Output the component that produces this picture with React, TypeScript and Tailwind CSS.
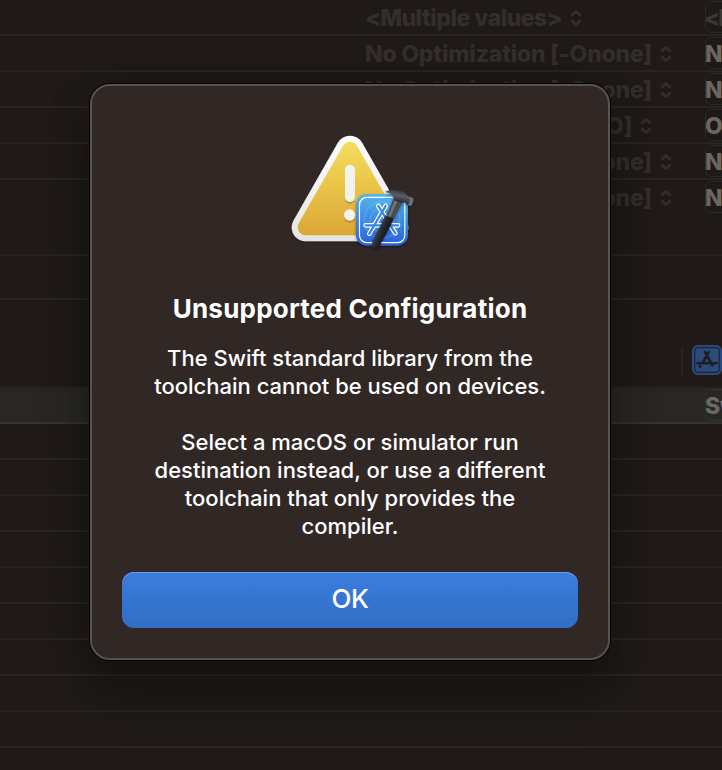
import React from "react";

function Chevrons() {
  return (
    <svg width="12" height="16" viewBox="0 0 12 16" fill="none" stroke="currentColor" strokeWidth="2.5" strokeLinecap="round" strokeLinejoin="round">
      <path d="M2 5 L6 1.4 L10 5 M2 11 L6 14.6 L10 11" />
    </svg>
  );
}

const settings = [
  { label: "<Multiple values>", value: "<M" },
  { label: "No Optimization [-Onone]", value: "No" },
  { label: "No Optimization [-Onone]", value: "No" },
  { label: "Optimize for Speed [-O]", value: "Op" },
  { label: "No Optimization [-Onone]", value: "No" },
  { label: "No Optimization [-Onone]", value: "No" },
];

function SettingsTable() {
  return (
    <div className="flex h-[770px] w-[722px] flex-col overflow-hidden">
      {settings.map((s, i) => (
        <div key={i} className={`flex h-9 shrink-0 border-b-2 ${i === 5 ? "border-transparent" : "border-[#292422]"}`}>
          <div className="flex w-[705px] shrink-0 items-center gap-[8px] pt-[2px] pl-[365px] text-[23px] font-extrabold whitespace-nowrap text-[#332e2c]">
            <span className={i === 0 ? "tracking-[-0.5px]" : i === 3 ? "tracking-[-0.05px]" : "tracking-[-0.2px]"}>{s.label}</span>
            <Chevrons />
          </div>
          <div className={`mt-px h-8 w-20 shrink-0 rounded-[6px] border border-[#233020] text-[23px] leading-[32px] font-extrabold ${i === 0 ? "text-[#3a3633]" : "text-[#6b6563]"}`}>
            <span className={i === 0 ? "-ml-[2px] tracking-[-1.5px]" : "-ml-px"}>{s.value}</span>
          </div>
        </div>
      ))}
      <div className="h-10 shrink-0 border-b-2 border-[#292422]" />
      <div className="h-11 shrink-0 border-b-2 border-[#292422]" />
      <div className="flex h-[88px] shrink-0 items-start justify-end border-b-2 border-[#271e1c] pt-[45px]">
        <div className="mt-[3px] mr-[9px] h-7 w-[2px] bg-[#292422]" />
        <svg width="30" height="30" viewBox="0 0 30 30" fill="none">
          <rect x="1" y="1" width="28" height="28" rx="5" fill="#2c4a7a" stroke="#294a80" strokeWidth="2" />
          <rect x="2.7" y="2.7" width="24.6" height="24.6" rx="3.5" stroke="#1d2431" strokeWidth="1.2" />
          <path d="M13 7 L20.500 20.500 M16.800 7 L10.500 18 M5.500 18.300 H16.500 M20 18.300 H24.500 M8.300 21 L7.800 21.800" stroke="#1c1e24" strokeWidth="2.6" strokeLinecap="round" />
        </svg>
      </div>
      <div className="flex h-9 shrink-0 justify-end border-b-2 border-[#343230] bg-[#282725]">
        <div className="mt-px -mr-[63px] h-8 w-20 shrink-0 rounded-[6px] border border-[#2b3827] text-[23px] leading-[32px] font-extrabold text-[#6b6866]">
          <span className="-ml-px tracking-[-0.5px]">Swift</span>
        </div>
      </div>
      {Array.from({ length: 9 }, (_, i) => (
        <div key={i} className="h-9 shrink-0 border-b-2 border-[#292422]" />
      ))}
    </div>
  );
}

function AlertIcon() {
  return (
    <svg width="145" height="135" viewBox="0 0 435 405" fill="none">
      <defs>
        <linearGradient id="rim" gradientUnits="userSpaceOnUse" x1="0" y1="30" x2="0" y2="348">
          <stop offset="0" stopColor="#ffffff" />
          <stop offset="1" stopColor="#e6e4e3" />
        </linearGradient>
        <linearGradient id="yellow" gradientUnits="userSpaceOnUse" x1="0" y1="48" x2="0" y2="330">
          <stop offset="0" stopColor="#f6dd5e" />
          <stop offset="0.5" stopColor="#e8c348" />
          <stop offset="1" stopColor="#dba637" />
        </linearGradient>
        <linearGradient id="blue" gradientUnits="userSpaceOnUse" x1="0" y1="207" x2="0" y2="362">
          <stop offset="0" stopColor="#55b6ea" />
          <stop offset="0.5" stopColor="#3a8be6" />
          <stop offset="1" stopColor="#2b60d6" />
        </linearGradient>
        <linearGradient id="handle" gradientUnits="userSpaceOnUse" x1="298" y1="305" x2="325" y2="317">
          <stop offset="0" stopColor="#3c3e44" />
          <stop offset="0.45" stopColor="#26282d" />
          <stop offset="1" stopColor="#15161a" />
        </linearGradient>
        <linearGradient id="head" gradientUnits="userSpaceOnUse" x1="352" y1="194" x2="345" y2="234">
          <stop offset="0" stopColor="#303238" />
          <stop offset="0.4" stopColor="#5d6067" />
          <stop offset="1" stopColor="#1c1d21" />
        </linearGradient>
        <filter id="soft" x="-20%" y="-20%" width="140%" height="140%">
          <feDropShadow dx="0" dy="4" stdDeviation="4" floodColor="#000" floodOpacity="0.4" />
        </filter>
        <filter id="mark" x="-50%" y="-20%" width="200%" height="150%">
          <feDropShadow dx="0" dy="5" stdDeviation="2" floodColor="#8a6410" floodOpacity="0.55" />
        </filter>
      </defs>
      <path d="M77 307 L210 74 L343 307 Z" fill="url(#rim)" stroke="url(#rim)" strokeWidth="84" strokeLinejoin="round" filter="url(#soft)" />
      <path d="M77 307 L210 74 L343 307 Z" fill="url(#yellow)" stroke="url(#yellow)" strokeWidth="48" strokeLinejoin="round" />
      <g fill="#f4f2ee" filter="url(#mark)">
        <rect x="195" y="119" width="30" height="112" rx="15" />
        <circle cx="209" cy="270" r="17" />
      </g>
      <rect x="228" y="207" width="156" height="155" rx="32" fill="url(#blue)" filter="url(#soft)" />
      <rect x="238.500" y="217" width="136" height="136" rx="22" stroke="#fff" strokeWidth="3.500" />
      <g stroke="#fff" strokeOpacity="0.3" strokeWidth="2">
        <circle cx="306" cy="285" r="54" />
        <circle cx="306" cy="285" r="36" />
      </g>
      <g strokeLinecap="round">
        <g stroke="#fff" strokeWidth="14">
          <path d="M295 243 L346 325" />
          <path d="M317 243 L268 326" />
          <path d="M257 301 H354" />
        </g>
        <g stroke="#3c86e3" strokeWidth="7">
          <path d="M295 243 L346 325" />
          <path d="M317 243 L268 326" />
          <path d="M257 301 H354" />
        </g>
      </g>
      <g filter="url(#soft)">
        <path d="M339 224 L367 233 L341 283 L319 275 Z" fill="#494b50" />
        <path d="M344 226 L352 229 L330 279 L323 276 Z" fill="#707277" />
        <path d="M316 271 L340 280 C334 304 311 337 299 362 C295 374 273 370 276 354 C283 334 304 301 316 271 Z" fill="url(#handle)" />
        <path d="M315 201 C327 193 354 192 373 202 C380 206 381 213 387 215 L399 219 C402 226 398 238 393 244 L381 239 C379 231 371 232 364 234 L341 225 C343 213 333 204 315 201 Z" fill="url(#head)" />
        <path d="M387 216 L399 219 C402 226 398 238 393 244 L383 240 C388 233 390 225 387 216 Z" fill="#6b6e74" />
      </g>
    </svg>
  );
}

export default function App() {
  return (
    <div className="relative h-[770px] w-[722px] overflow-hidden bg-[#1f1a17] font-['Inter','Liberation_Sans',sans-serif]">
      <SettingsTable />
      <div
        role="alertdialog"
        className="absolute top-[84px] left-[90px] flex h-[576px] w-[520px] flex-col items-center rounded-[20px] border-2 border-[#5a5250] bg-[#312826] px-[30px] pt-[39px] shadow-[0_0_0_1px_#000,0_34px_50px_0_rgba(0,0,0,0.26),0_0_40px_0_rgba(0,0,0,0.2)]"
      >
        <div className="flex w-full pl-[158px]">
          <AlertIcon />
        </div>
        <h1 className="mt-[31px] text-[26px] leading-9 font-bold tracking-[0.24px] whitespace-nowrap text-white">Unsupported Configuration</h1>
        <p className="mt-[17px] text-center text-[22px] leading-7 font-medium whitespace-nowrap text-white">
          The Swift standard library from the
          <br />
          toolchain cannot be used on devices.
          <br />
          <br />
          Select a macOS or simulator run
          <br />
          destination instead, or use a different
          <br />
          toolchain that only provides the
          <br />
          compiler.
        </p>
        <button className="mt-auto mb-[30px] h-14 w-full shrink-0 rounded-[12px] bg-linear-to-b from-[#3b7de0] to-[#306ec4] pb-[3px] text-[26px] font-medium tracking-[-0.5px] text-white shadow-[inset_0_1px_0_0_#6a9ee8]">
          OK
        </button>
      </div>
    </div>
  );
}
